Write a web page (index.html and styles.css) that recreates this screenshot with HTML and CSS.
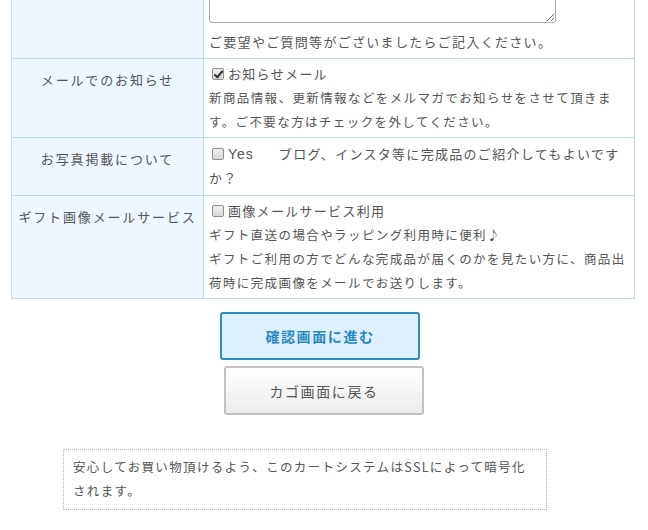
FILE: index.html
```html
<!DOCTYPE html>
<html lang="ja">
<head>
<meta charset="utf-8">
<link rel="stylesheet" href="styles.css">
</head>
<body>
<div class="page">
  <table class="form-table">
    <tr>
      <th class="label"></th>
      <td class="value first">
        <textarea class="memo"></textarea>
        <div class="line">ご要望やご質問等がございましたらご記入ください。</div>
      </td>
    </tr>
    <tr>
      <th class="label">メールでのお知らせ</th>
      <td class="value">
        <label class="check"><input type="checkbox" checked>お知らせメール</label>
        <div class="line small">新商品情報、更新情報などをメルマガでお知らせをさせて頂きます。ご不要な方はチェックを外してください。</div>
      </td>
    </tr>
    <tr>
      <th class="label">お写真掲載について</th>
      <td class="value photo">
        <div class="check"><input type="checkbox" id="yes"><label class="yes" for="yes">Yes</label><span>ブログ、インスタ等に完成品のご紹介してもよいです</span></div>
        <div class="line">か？</div>
      </td>
    </tr>
    <tr>
      <th class="label">ギフト画像メールサービス</th>
      <td class="value">
        <label class="check"><input type="checkbox">画像メールサービス利用</label>
        <div class="line small">ギフト直送の場合やラッピング利用時に便利♪</div>
        <div class="line small">ギフトご利用の方でどんな完成品が届くのかを見たい方に、商品出荷時に完成画像をメールでお送りします。</div>
      </td>
    </tr>
  </table>

  <div class="actions">
    <button class="btn btn-primary" type="button">確認画面に進む</button>
    <button class="btn btn-back" type="button">カゴ画面に戻る</button>
  </div>

  <div class="notice">安心してお買い物頂けるよう、このカートシステムはSSLによって暗号化されます。</div>
</div>
</body>
</html>
```

FILE: styles.css
```css
html, body {
  margin: 0;
  padding: 0;
  background: #fff;
}

body {
  font-family: "Noto Sans CJK JP", "Noto Sans", sans-serif;
  font-size: 13px;
  color: #555;
  overflow: hidden;
}

.page {
  padding-left: 11px;
  width: 624px;
}

.form-table {
  border-collapse: collapse;
  width: 624px;
  margin-top: -37px;
  table-layout: fixed;
}

.form-table th,
.form-table td {
  border: 1px solid #bcdde9;
}

.label {
  width: 191px;
  background: #eef7fe;
  font-weight: normal;
  text-align: center;
  vertical-align: top;
  padding: 9px 0 0;
  line-height: 24px;
  letter-spacing: 1.85px;
  white-space: nowrap;
}

.value {
  padding: 3px 2px 3px 5px;
  vertical-align: top;
  line-height: 24px;
  letter-spacing: 1.3px;
  line-break: strict;
}

.value.first {
  padding-bottom: 4px;
}

.value.photo {
  padding-top: 4px;
  padding-bottom: 5px;
}

.memo {
  display: block;
  width: 347px;
  height: 56px;
  margin: 0 0 7px 0;
  border: 1px solid #a9a9a9;
  border-radius: 3px;
  box-sizing: border-box;
  resize: vertical;
}

.line {
  display: block;
}

.small {
  font-size: 12.5px;
  letter-spacing: 1.4px;
}

.check {
  display: flex;
  align-items: center;
  height: 24px;
  line-height: 24px;
  white-space: nowrap;
}

.check input {
  appearance: none;
  -webkit-appearance: none;
  width: 12px;
  height: 12px;
  margin: 0 4px 0 3px;
  border: 1px solid #8e8f8f;
  border-radius: 2px;
  background: linear-gradient(#f0f0f0, #d8d8d8);
  box-sizing: border-box;
  position: relative;
  flex: none;
}

.check input:checked::after {
  content: "";
  position: absolute;
  left: 3px;
  top: 0px;
  width: 3px;
  height: 7px;
  border: solid #333;
  border-width: 0 2px 2px 0;
  transform: rotate(40deg);
}

.yes {
  font-family: "Liberation Sans", Arial, sans-serif;
  font-size: 14px;
  letter-spacing: 1px;
  margin-right: 25px;
}

.actions {
  display: flex;
  flex-direction: column;
  align-items: center;
  width: 648px;
  margin-left: -11px;
  padding-top: 13px;
}

.btn {
  font-family: "Noto Sans CJK JP", "Noto Sans", sans-serif;
  font-size: 14px;
  letter-spacing: 1.6px;
  border-radius: 3px;
  box-sizing: border-box;
  cursor: pointer;
  padding: 0;
}

.btn-primary {
  width: 200px;
  height: 48px;
  margin-right: 8px;
  border: 2px solid #2b8ac0;
  background: #dcf0fd;
  color: #2a88bf;
  font-weight: bold;
}

.btn-back {
  width: 200px;
  height: 49px;
  margin-top: 6px;
  border: 2px solid #c2c2c2;
  background: linear-gradient(#ffffff, #ececec);
  color: #555;
}

.notice {
  margin: 34px 0 0 52px;
  width: 484px;
  box-sizing: border-box;
  border: 1px dotted #b5b5b5;
  padding: 5px 14px 6px 9px;
  line-height: 24px;
  letter-spacing: 1.35px;
  font-size: 12.5px;
}
```
